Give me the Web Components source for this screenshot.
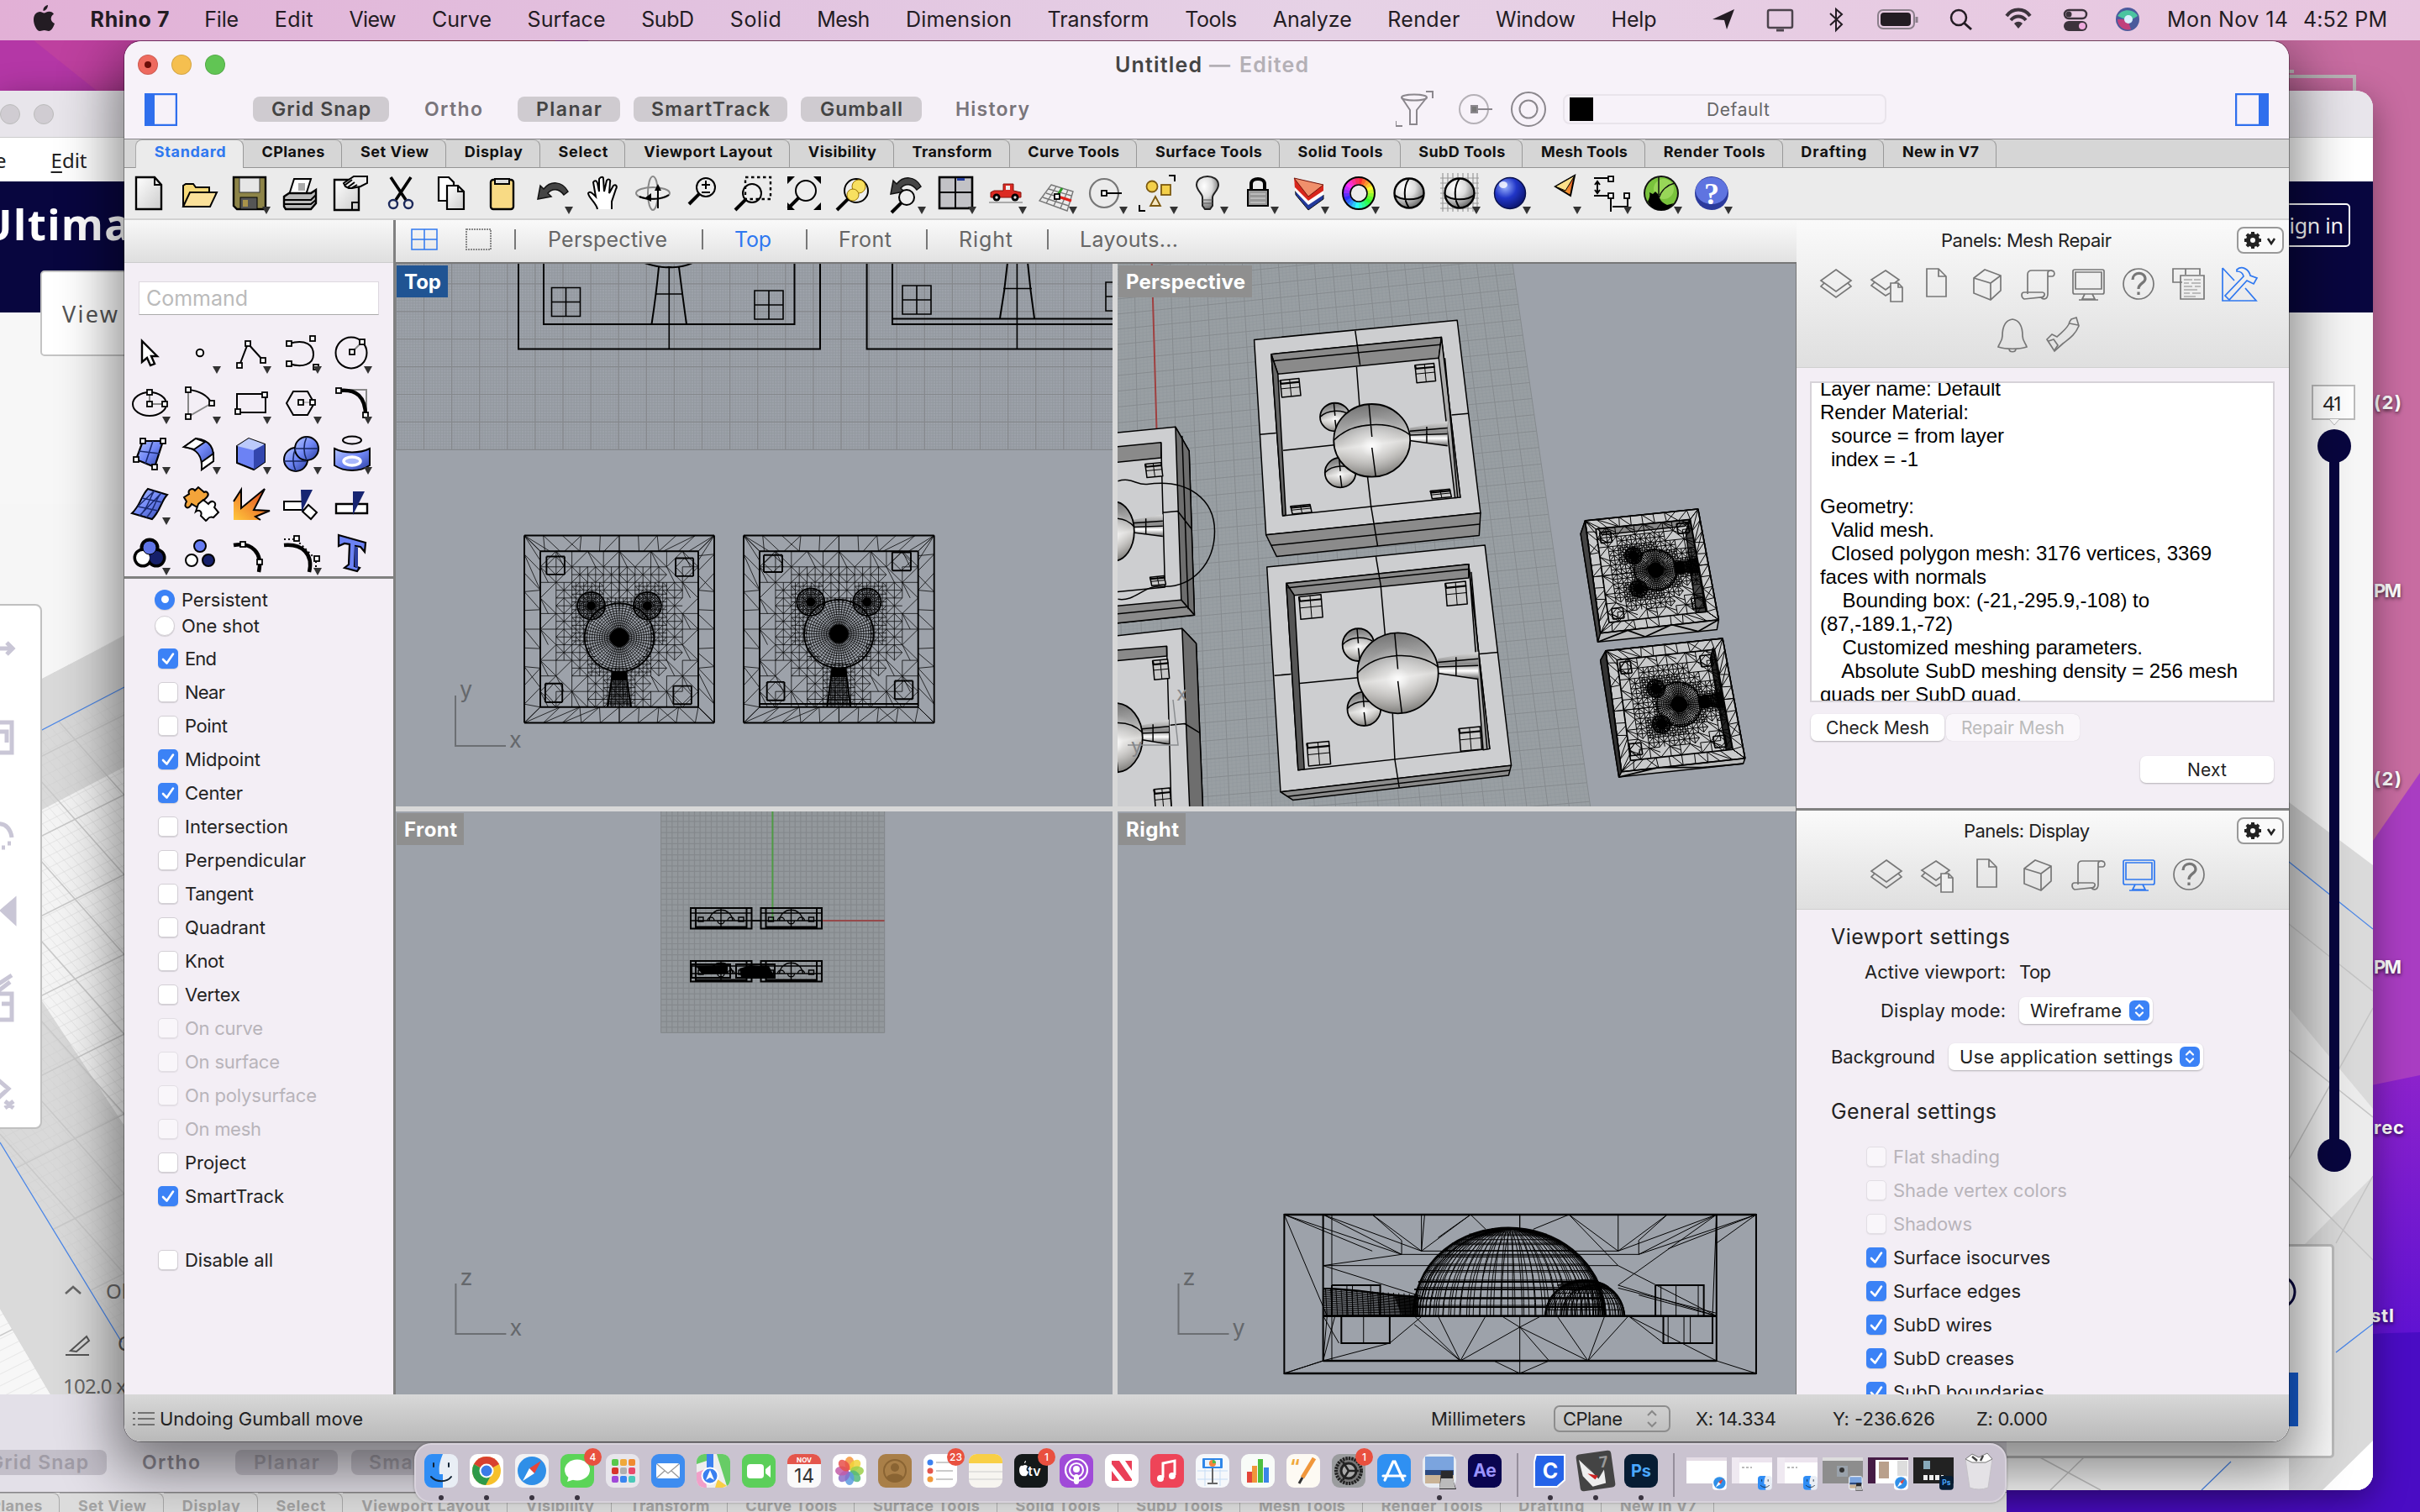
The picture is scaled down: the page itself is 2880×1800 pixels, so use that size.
<!DOCTYPE html>
<html lang="en">
<head>
<meta charset="utf-8">
<title>Rhino 7</title>
<style>
html,body{margin:0;padding:0}
body{width:2880px;height:1800px;overflow:hidden;position:relative;font-family:Inter,"Liberation Sans",sans-serif;font-size:22px;color:#222}
</style>
</head>
<body>
<desk-top></desk-top>
<script>
const def=(name,css,html,after)=>customElements.define(name,class extends HTMLElement{
  constructor(){super();this.attachShadow({mode:'open'})}
  connectedCallback(){
    if(this.done)return;this.done=true;
    this.shadowRoot.innerHTML='<style>*{box-sizing:border-box}:host{display:block;box-sizing:border-box}'+css+'</style>'+(typeof html==='function'?html(this):html);
    if(after)after(this);
  }});
const T=(w,t,x='')=>`<fit-text w="${w}" ${x}>${t}</fit-text>`;
const L=(a,b,c,d)=>`M${a.toFixed(1)} ${b.toFixed(1)}L${c.toFixed(1)} ${d.toFixed(1)}`;

/* ---------- icon artwork, each on a 40 unit square ---------- */
const K='fill="none" stroke="#000" stroke-width="2"';
const H=(x,y)=>`<rect x="${x-3}" y="${y-3}" width="6" height="6" fill="#fff" stroke="#000" stroke-width="1.8"/>`;
const mag=(x,y,r)=>`<path d="M${x-r*.7} ${y+r*.7}L${x-r-9} ${y+r+9}" stroke="#000" stroke-width="4"/><circle cx="${x}" cy="${y}" r="${r}" fill="#eee" stroke="#000" stroke-width="2"/>`;
const ARW='<path d="M3 27L6 11L10 15C18 5 32 5 39 18L34 22C28 14 20 14 15 20L19 24Z" fill="#444" stroke="#111" stroke-width="1.5"/>';
const G=`<defs><linearGradient id="w" x2="1" y2="1"><stop stop-color="#fff"/><stop offset="1" stop-color="#ccc"/></linearGradient><linearGradient id="b" x2="1" y2="1"><stop stop-color="#b6c6ff"/><stop offset=".5" stop-color="#6f86f5"/><stop offset="1" stop-color="#2b3fa0"/></linearGradient><linearGradient id="o" x1="0" y1="1" x2="1" y2="0"><stop stop-color="#ffc83c"/><stop offset="1" stop-color="#e2421f"/></linearGradient><radialGradient id="s" cx=".35" cy=".3" r=".8"><stop stop-color="#fff"/><stop offset=".45" stop-color="#ddd"/><stop offset="1" stop-color="#555"/></radialGradient><radialGradient id="u" cx=".35" cy=".3" r=".8"><stop stop-color="#9bb4ff"/><stop offset=".45" stop-color="#2136c8"/><stop offset="1" stop-color="#081060"/></radialGradient></defs>`;
const I={
new:`<path d="M5 1H27L35 10V39H5Z" fill="url(#w)" stroke="#000" stroke-width="2.4"/><path d="M27 1V10H35" ${K}/>`,
open:`<path d="M1 36V11L4 9H13L16 13H32V19" fill="#f6d978" stroke="#000" stroke-width="2"/><path d="M1 36L9 19H41L33 36Z" fill="#fbe19a" stroke="#000" stroke-width="2"/>`,
save:`<path d="M1 1H39V39H5L1 35Z" fill="#8d8448" stroke="#000" stroke-width="2.4"/><rect x="8" y="2" width="24" height="17" fill="#e6e6e6" stroke="#333"/><rect x="9" y="25" width="20" height="14" fill="#555" stroke="#000"/><rect x="12" y="28" width="6" height="8" fill="#a9934a"/>`,
print:`<path d="M7 22L13 3H33L27 22Z" fill="#fff" stroke="#000" stroke-width="2"/><rect x="18" y="8" width="8" height="9" fill="#aaa"/><path d="M1 24L7 20H33L39 16V32L33 39H3L1 36Z" fill="#bbb" stroke="#000" stroke-width="2.4"/><path d="M1 28H33L39 22M1 33H33L39 28" ${K} stroke-width="2.4"/>`,
props:`<path d="M1 4H30V40H1Z" fill="url(#w)" stroke="#000" stroke-width="2.4"/><path d="M22 40V31H30" ${K}/><path d="M40 0H24L12 8L14 12L18 14L22 14L32 12L40 8Z" fill="#eee" stroke="#000" stroke-width="2"/><path d="M14 10L22 4M17 13L25 7M21 14L28 10" ${K}/>`,
cut:`<path d="M8 1L26 28M32 1L14 28" stroke="#000" stroke-width="3.6"/><circle cx="11" cy="33" r="5" fill="none" stroke="#1d2a5c" stroke-width="2.4"/><circle cx="29" cy="33" r="5" fill="none" stroke="#1d2a5c" stroke-width="2.4"/>`,
copy:`<path d="M5 1H17L23 7V29H5Z" fill="#fff" stroke="#000" stroke-width="2.2"/><path d="M15 11H28L35 18V39H15Z" fill="url(#w)" stroke="#000" stroke-width="2.2"/><path d="M28 11V18H35" ${K}/>`,
paste:`<rect x="7" y="4" width="27" height="35" rx="3" fill="#f8da84" stroke="#000" stroke-width="2.4"/><path d="M12 3H29V9H12Z" fill="#ddd" stroke="#000" stroke-width="2"/>`,
undo:ARW,
hand:`<path d="M14 39C13 32 3 25 3 20C5 17 8 20 12 24L9 7C11 4 13 5 14 8L16 18L16 3C18 0 21 0 21 3L22 18L25 5C27 2 30 4 29 7L28 20L33 11C36 9 38 12 36 15L31 30L31 39" fill="#fff" stroke="#000" stroke-width="2"/>`,
rot:`<ellipse cx="20" cy="20" rx="20" ry="7" fill="none" stroke="#888" stroke-width="2"/><ellipse cx="20" cy="20" rx="6" ry="20" fill="none" stroke="#888" stroke-width="2"/><path d="M4 24C12 28 30 28 39 22M26 38V12" ${K} stroke-width="2.6"/><path d="M22 17L26 9L30 17ZM18 20L10 26L18 30Z"/>`,
zoom:mag(23,13,11)+`<path d="M18 10H28M23 5V15M18 19H28" ${K}/>`,
zwin:mag(18,20,11)+`<path d="M10 1H40V27H10Z" fill="none" stroke="#000" stroke-width="2.4" stroke-dasharray="3.5 3.5"/>`,
zext:mag(22,17,12)+`<path d="M0 0H9L0 9ZM40 0V9L31 0ZM0 40V31L9 40ZM40 40H31L40 31Z"/>`,
zsel:mag(22,17,14)+`<circle cx="25" cy="12" r="8" fill="#f8e060" stroke="#987400"/><circle cx="18" cy="22" r="7" fill="#f8e060" stroke="#987400"/>`,
uview:`<g transform="translate(0 -6)">${ARW}</g>`+mag(22,25,9),
four:`<rect x="1" y="1" width="39" height="37" fill="#c2c2c6" stroke="#000" stroke-width="2.6"/><path d="M20 1V38M1 19H40" ${K}/><rect x="22" y="2" width="9" height="3" fill="#223a9c"/>`,
car:`<path d="M2 25V19L6 17H17V9H29V17L38 19V25Z" fill="#dc2a22" stroke="#86130d"/><path d="M20 16V11H25V16Z" fill="#eee"/><circle cx="9" cy="25" r="4.5"/><circle cx="31" cy="25" r="4.5"/><circle cx="9" cy="25" r="1.7" fill="#ddd"/><circle cx="31" cy="25" r="1.7" fill="#ddd"/><rect y="30" width="40" height="2" fill="#aaa"/>`,
cpl:`<g fill="none" stroke="#777" stroke-width="1.4"><path d="M14 10L40 18L33 41L0 29ZM11 15L38 23M8 20L37 29M4 25L35 35M20 12L8 32M27 14L17 35M34 16L25 38"/></g><path d="M22 24L38 29" stroke="#e0211b" stroke-width="3.4"/><path d="M22 22L27 14" stroke="#2b9c26" stroke-width="3"/>${H(21,24)}`,
circ:`<circle cx="17" cy="20" r="17" fill="none" stroke="#777" stroke-width="2.2"/><path d="M17 20H38" ${K}/>${H(17,20)}`,
filt:`<g fill="#f4d04a" stroke="#7d5a10" stroke-width="1.8"><circle cx="14" cy="12" r="6.5"/><rect x="25" y="10" width="11" height="12"/><path d="M18 24L24 35H12Z" fill="#f6e7c0"/></g><path d="M34 -1H41V6M6 41H-1V34" ${K}/>`,
bulb:`<path d="M14 25C14 20 7 17 7 10C7 3 14 0 20 0S33 3 33 10C33 17 26 20 26 25V35L23 39H17L14 35Z" fill="url(#s)" stroke="#222" stroke-width="2"/><path d="M14 28H26M14 32H26" stroke="#555"/>`,
lock:`<path d="M12 17V9C12 1 28 1 28 9V17" fill="none" stroke="#000" stroke-width="4"/><rect x="8" y="16" width="24" height="19" fill="#999" stroke="#000" stroke-width="2"/><path d="M11 21H29M11 26H29M11 31H29" stroke="#ddd"/>`,
layer:`<path d="M4 8L5 22L20 40L38 27V22Z" fill="#223a9c" stroke="#111"/><path d="M3 5L4 17L20 34L38 22V18Z" fill="#fff"/><path d="M3 2L4 13L20 29L38 17V10Z" fill="#d8261c"/><path d="M3 2L38 10L20 24Z" fill="#f0906c" stroke="#71160e"/>`,
wheel:`<g fill="none" stroke-width="8">${[...Array(24)].map((_,i)=>`<path d="M20 5.500A14.500 14.500 0 0 1 24.500 6.200" transform="rotate(${i*15} 20 20)" stroke="hsl(${i*15} 95% 58%)"/>`).join('')}</g><circle cx="20" cy="20" r="19" ${K}/><circle cx="20" cy="20" r="10" fill="#ebebeb" stroke="#000" stroke-width="1.6"/>`,
sph:`<circle cx="20" cy="20" r="17.500" fill="url(#s)" stroke="#000" stroke-width="2.4"/><path d="M20 2.500C13 12 13 28 20 37.500M2.500 22C10 29 30 29 37.500 22" ${K}/>`,
blue:`<circle cx="20" cy="20" r="18.500" fill="url(#u)" stroke="#08104c" stroke-width="1.5"/><ellipse cx="12" cy="10" rx="5" ry="4" fill="#fff" opacity=".8"/>`,
cone:`<path d="M14 12L37 -1L32 23Z" fill="url(#o)" stroke="#000" stroke-width="2"/><path d="M14 12L37 -1L26 17Z" fill="#fde08a" stroke="#000"/>`,
dims:`<path d="M0 2H22M4 6V20M0 23H22M20 26V42M40 23V42M22 36H40M1 10L4 6L7 10M1 16L4 20L7 16" ${K}/>${H(20,3)+H(20,23)+H(39,23)}`,
grass:`<circle cx="20" cy="20" r="21" fill="#111"/><circle cx="20" cy="20" r="19" fill="#79c23c"/><circle cx="23" cy="15" r="12" fill="#98d658"/><path d="M4 30C6 26 7 22 6 19L10 21L13 18L17 22C18 27 20 31 27 34L35 32L29 38C22 42 12 40 8 36Z"/><path d="M17 0V22M17 26C20 16 28 10 36 8" fill="none" stroke="#111" stroke-width="1.500"/>`,
help:`<circle cx="20" cy="20" r="20" fill="#2b3a9c"/><ellipse cx="20" cy="17" rx="19" ry="16" fill="#5f74e0"/><text x="20" y="33" font-size="36" font-weight="700" font-family="Liberation Serif" text-anchor="middle" fill="#fff">?</text>`,
/* modelling palette */
ptr:`<path d="M11 6V31L17 26L21 35L26 33L22 24L29 24Z" fill="#fff" stroke="#000" stroke-width="2.4"/>`,
pnt:`<circle cx="20" cy="20" r="4.2" fill="#fff" stroke="#000" stroke-width="2"/>`,
poly:`<path d="M7 35L17 9L35 29" ${K}/>${H(7,35)+H(17,9)+H(35,29)}`,
crv:`<path d="M6 9C26 3 35 11 35 22C35 34 22 38 6 33" ${K}/>${H(6,9)+H(34,3)+H(6,33)+H(38,37)}`,
cir:`<circle cx="20" cy="20" r="18.500" ${K}/><path d="M21 19L33 7" stroke="#888" stroke-width="2"/>${H(21,19)+H(33,7)}`,
ell:`<ellipse cx="20" cy="21" rx="20" ry="14" ${K}/><path d="M20 7V21H38" fill="none" stroke="#888" stroke-width="2"/>${H(20,7)+H(20,21)+H(38,21)}`,
arc:`<path d="M6 4V36L34 20" fill="none" stroke="#888" stroke-width="2"/><path d="M6 4C18 5 28 9 34 20" ${K}/>${H(6,4)+H(34,20)+H(6,36)}`,
rect:`<path d="M4 9H38V31H4Z" ${K} stroke-width="2.4"/>${H(37,10)+H(5,30)}`,
hex:`<path d="M3 20L11 6H28L36 20L28 34H11Z" ${K}/><path d="M20 19H34" stroke="#888"/>${H(20,19)+H(34,19)}`,
fil:`<path d="M6 4H38V35" fill="none" stroke="#888" stroke-width="2"/><path d="M6 5C26 3 37 12 37 35" fill="none" stroke="#000" stroke-width="4.400"/>${H(5,5)+H(37,34)}`,
srf:`<path d="M12 5H36L26 36L4 27Z" fill="url(#b)" stroke="#000" stroke-width="2.2"/><path d="M24 5L15 32M7 17L32 20" stroke="#1a2a70" stroke-width="1.600"/>${H(12,5)+H(36,5)+H(4,27)+H(26,36)}`,
swp:`<path d="M1 12L15 2C33 4 37 14 36 29L22 39C23 24 18 14 1 12Z" fill="url(#b)" stroke="#000" stroke-width="2"/><path d="M1 12L15 2L26 6L13 15ZM22 30L36 20V29L22 39Z" fill="#fff" stroke="#000" stroke-width="2"/>`,
box:`<path d="M4 11L18 2L37 9V30L24 39L4 31Z" fill="#6c82f4" stroke="#000" stroke-width="2"/><path d="M4 11L18 2L37 9L24 16Z" fill="#bccafb"/><path d="M24 16L37 9V30L24 39Z" fill="#3346ae"/>`,
sph2:`<g fill="url(#b)" stroke="#000" stroke-width="2"><circle cx="14" cy="27" r="14"/><circle cx="27" cy="14" r="14"/></g><path d="M27 0C23 9 23 19 27 28M13 14H41M14 13C10 22 10 32 14 41M0 29H26" stroke="#16265f" fill="none" stroke-width="1.600"/>`,
prj:`<ellipse cx="21" cy="4" rx="11" ry="4.500" ${K}/><path d="M0 14C12 20 30 20 42 14V34C30 42 12 42 0 34Z" fill="url(#b)" stroke="#000" stroke-width="2"/><ellipse cx="21" cy="29" rx="10" ry="5" fill="#a9b8fb" stroke="#fff" stroke-width="3.500"/>`,
msh:`<path d="M18 2L41 9C34 16 33 28 23 38L-1 31C9 22 10 10 18 2Z" fill="url(#b)" stroke="#000" stroke-width="2"/><path d="M11 13L35 18M6 23L30 28M26 4C20 12 18 26 8 34M34 7C26 15 26 28 16 36M6 23L26 4M8 34L34 7" fill="none" stroke="#1a2a70" stroke-width="1.500"/>`,
puz:`<path d="M1 12L7 8C5 3 11 0 14 4L18 0L25 6C28 4 32 8 28 12L22 18L17 24L10 20C6 28 0 24 4 17Z" fill="#f3a43a" stroke="#000" stroke-width="2"/><path d="M18 20L24 15L30 20C34 14 41 18 37 24L42 30L36 36C30 34 30 38 27 40L21 34C23 29 19 26 15 29Z" fill="#fff" stroke="#000" stroke-width="2"/>`,
exp:`<path d="M0 39V15L9 3V25L37 2L23 27L42 28L26 35L32 39Z" fill="url(#o)"/><path d="M0 17L9 3V25L37 2L24 27L43 28L26 35L32 39" ${K} stroke-width="2.200"/>`,
trm:`<path d="M0 17H22V27H0Z" fill="#fff" stroke="#000" stroke-width="2"/><path d="M22 29L29 21L39 30L32 38Z" fill="#fff" stroke="#000" stroke-width="2"/><path d="M20 3H34L21 29Z" fill="#172572"/>`,
spl:`<path d="M2 20H39V31H2Z" fill="#fff" stroke="#000" stroke-width="2.400"/><path d="M22 5H36L22 33Z" fill="#172572"/>`,
bool:`<g stroke="#000" stroke-width="7"><circle cx="20" cy="12" r="8"/><circle cx="12" cy="24" r="8"/><circle cx="28" cy="24" r="8"/></g><circle cx="12" cy="24" r="8" fill="#fff"/><circle cx="28" cy="24" r="8" fill="#16206a"/><circle cx="20" cy="12" r="8" fill="#5f74e6" stroke="#000"/>`,
grp:`<g stroke="#000" stroke-width="2"><circle cx="20" cy="10" r="7" fill="#667cf2"/><circle cx="10" cy="27" r="7" fill="#fff"/><circle cx="30" cy="27" r="7" fill="#16206a"/></g>`,
ed1:`<path d="M0 9C22 5 35 18 30 41" fill="none" stroke="#000" stroke-width="4.500"/>${H(11,8)+H(31,29)}`,
ed2:`<path d="M0 9C22 7 35 20 30 41" fill="none" stroke="#000" stroke-width="4.500"/><path d="M0 2H14L38 26V38" fill="none" stroke="#000" stroke-width="2" stroke-dasharray="2 3"/>${H(15,1)+H(39,25)}`,
txt:`<path d="M5 -3L37 6L36 17L31 11L25 10L24 34L30 36L27 40L12 36L17 32L18 8L12 7L5 10Z" fill="#6c82f4" stroke="#000" stroke-width="2.200"/><path d="M24 10L24 34L28 37L28 12Z" fill="#2c3e9f"/>`,
/* panel selectors */
p_lay:`<path d="M20 3L38 16L20 29L2 16Z"/><path d="M6 19L2 23L20 36L38 23L34 19"/>`,
p_lay2:`<path d="M19 4L35 15L19 27L2 15Z"/><path d="M6 18L2 22L19 34L24 31"/><path d="M25 19H34L39 24V41H25Z" fill="#efefef"/><path d="M34 19V24H39"/>`,
p_doc:`<path d="M8 2H22L31 11V35H8ZM22 2V11H31"/>`,
p_box:`<path d="M4 13L17 3L36 10L36 28L24 39L4 31ZM4 13L24 19L36 10M24 19V39"/>`,
p_scr:`<path d="M8 32V9C8 5 10 4 13 4H36C41 4 41 11 37 11H32V32C32 39 26 39 24 36L4 38C0 36 0 30 4 30H26M32 11V7C32 4 36 3 38 5M26 30C30 31 28 36 24 36"/>`,
p_mon:`<rect x="2" y="3" width="37" height="29" rx="2"/><path d="M5 6H36V26H5ZM16 32L13 38H28L25 32M9 39H32"/>`,
p_q:`<circle cx="20" cy="20" r="18"/><path d="M13 15C13 5 28 5 28 14C28 19 20 19 20 26M20 29.500V33" stroke-width="3.200"/>`,
p_lib:`<path d="M12 2H1V18H12M1 2H33V9M16 2V9"/><path d="M10 10H38V38H10Z"/><path d="M14 15H24M26 15H34M14 19H20M23 19H34M14 23H24M27 23H34M14 27H30M14 31H21M24 31H34M14 35H28" stroke="#aaa"/>`,
p_fix:`<path d="M0 1L14 16M0 1V40H40L27 25M0 40V1"/><path d="M17 3C23 -2 31 2 33 10L41 13L37 20L29 16L8 39L3 34L25 11C24 6 21 5 17 5Z"/>`,
p_bell:`<path d="M20 2C27 3 32 9 32 22C32 28 36 31 37 35C28 38 12 38 3 35C4 31 8 28 8 22C8 9 13 3 20 2ZM16 37C16 42 24 42 24 37"/>`,
p_leg:`<path d="M30 2L36 0L39 10C34 22 26 26 20 31L10 40L1 26L7 20L13 23C19 17 27 12 28 5Z"/><path d="M3 28L9 26L14 33L10 39M28 7L38 9"/>`,
};
def('i-c','svg{display:block;overflow:visible}',e=>{const s=e.getAttribute('s')||40,n=e.getAttribute('n'),c=e.getAttribute('c');
 const p=n.startsWith('p_');return `<svg width="${s}" height="${s}" viewBox="0 0 40 40">${G}<g ${p?`fill="none" stroke="${c||'#777'}" stroke-width="1.700"`:''}>${I[n]}</g></svg>`});
def('tool-cell',':host{width:60px;height:60px;flex:none;display:grid;place-items:center;position:relative}i{position:absolute;left:45px;top:46px;border:5px solid transparent;border-top:9px solid #333;border-bottom:0}',
 e=>`<i-c n="${e.getAttribute('n')}"></i-c>${e.hasAttribute('d')?'<i></i>':''}`);
const cells=s=>s.split(' ').map(x=>`<tool-cell n="${x.replace('*','')}" ${x.endsWith('*')?'d':''}></tool-cell>`).join('');

/* ---------- check box rows ---------- */
const tick='<svg width="24" height="24" viewBox="0 0 24 24"><path d="M6 13L10.500 17.500L18 6.500" fill="none" stroke="#fff" stroke-width="2.600" stroke-linecap="round" stroke-linejoin="round"/></svg>';
def('check-row',':host{display:flex;align-items:center;height:40px;gap:8px}b{width:24px;height:24px;border-radius:5px;background:#fff;border:1px solid #d3cfd5;box-shadow:0 1px 1px #0002;flex:none}b.on{background:#3b82f6;border:0}b.off{opacity:.5}:host([r]) b{border-radius:50%}:host([r]){height:31px}i{display:block;width:9px;height:9px;border-radius:50%;background:#fff;margin:7.500px}',
 e=>{const s=e.getAttribute('s'),r=e.hasAttribute('r');return `<b class="${s=='1'?'on':''} ${s=='x'?'off':''}">${s=='1'?(r?'<i></i>':tick):''}</b><span style="${s=='x'?'color:#b8b4ba':''}"><slot></slot></span>`});
const rows=a=>a.map(([t,w,s])=>`<check-row s="${s||0}">${T(w,t)}</check-row>`).join('');

/* ---------- window title, snap bar and tool tabs ---------- */
def('snap-bar',`:host{height:117px;background:#f7f2f9;border-bottom:1px solid #88868a;border-radius:20px 20px 0 0;font-weight:600}
.t{height:56px;display:flex;align-items:center;position:relative}
.l{display:flex;gap:16px;padding-left:16px}.l i{width:24px;height:24px;border-radius:50%;border:1px solid #0002;display:grid;place-items:center}.l u{width:8px;height:8px;border-radius:50%;background:#6b0d08}
.n{display:flex;font-size:25px;gap:9px;padding-left:1059px;color:#444}.n span{color:#b4b0b6;display:flex;gap:13px}
.r{height:50px;display:flex;align-items:center;font-size:23px;color:#79757b}
.p{height:30px;display:flex;align-items:center;border-radius:8px}.on{background:#cfcbd0;color:#444}
:host([dim]){background:#e3e0e8}:host([dim]) .on{background:#c3bfc9;color:#a09ca6}:host([dim]) .r{color:#8c8892}:host([dim]) .t{opacity:0}
svg{display:block}.f{height:36px;width:385px;border:2px solid #e9e4eb;border-radius:8px;display:flex;align-items:center;font-weight:400;font-size:21px;color:#666;padding-left:6px}.f b{width:28px;height:28px;background:#000;margin-right:135px}`,
 e=>`<div class="t"><div class="l"><i style="background:#ee6a5f"><u></u></i><i style="background:#f5bf4f"></i><i style="background:#61c554"></i></div>
 <div class="n">${e.hasAttribute('dim')?'':T(103,'Untitled')+'<span>'+T(23,'—')+T(82,'Edited')+'</span>'}</div></div>
 <div class="r"><svg style="margin:0 90px 0 24px" width="39" height="39"><path d="M1 1H38V38H1Z" fill="none" stroke="#2f6fed" stroke-width="2.500"/><rect width="12" height="39" fill="#2f6fed"/></svg>
 <div class="p on" style="padding:0 22px;margin-right:42px">${T(118,'Grid Snap')}</div><div class="p" style="margin-right:42px">${T(69,'Ortho')}</div>
 <div class="p on" style="padding:0 22px;margin-right:16px">${T(78,'Planar')}</div><div class="p on" style="padding:0 21px;margin-right:16px">${T(141,'SmartTrack')}</div>
 ${e.hasAttribute('dim')?'':`<div class="p on" style="padding:0 23px;margin-right:40px">${T(98,'Gumball')}</div><div class="p" style="width:524px">${T(88,'History')}</div>
 <svg width="199" height="44" viewBox="0 0 199 44" fill="none" stroke="#8b878d" stroke-width="2"><ellipse cx="22" cy="8" rx="15" ry="3.500"/><path d="M7 8L17 23V40H25V23L37 8M36 1H44V9M0 36V42H8" /><circle cx="93" cy="22" r="17" stroke="#b5b1b7"/><path d="M93 22H115"/><rect x="90" y="18" width="7" height="8" fill="#777"/><circle cx="158" cy="22" r="20"/><circle cx="158" cy="22" r="10.500"/></svg>
 <div class="f"><b></b>${T(75,'Default')}</div><svg style="margin-left:415px" width="40" height="39"><path d="M1 1H39V38H1Z" fill="none" stroke="#2f6fed" stroke-width="2.500"/><rect x="28" width="12" height="39" fill="#2f6fed"/></svg>`}</div>`);
def('tool-tabs',`:host{height:34px;background:#d6d6d6;border-bottom:1px solid #949494;display:flex;padding-left:13px;font-size:18px;font-weight:700;color:#111}
div{height:34px;padding:0 20px 6px 21.700px;display:flex;align-items:center;border:1px solid #999;border-left:0;border-bottom:0;border-radius:0 8px 0 0;border-top-color:#aaa;flex:none}
.a{background:#ebebeb;color:#2f78f0;border-left:1px solid #aaa;border-radius:8px 8px 0 0}
:host([dim]){color:#a3a3a3;background:#dcdcdc}:host([dim]) div{padding-bottom:5px;border-color:#aaa}:host([dim]) .a{color:#a3a3a3}`,
 ()=>[['Standard',85],['CPlanes',75],['Set View',81],['Display',69],['Select',59],['Viewport Layout',153],['Visibility',81],['Transform',95],['Curve Tools',109],['Surface Tools',127],['Solid Tools',101],['SubD Tools',103],['Mesh Tools',103],['Render Tools',121],['Drafting',78],['New in V7',91]].map(([t,w],i)=>`<div class="${i?'':'a'}">${T(w,t)}</div>`).join(''));
def('tool-strip',':host{display:flex;height:62px;background:#ebebeb;border-bottom:2px solid #d2d2d2}tool-cell:first-of-type{margin-left:-1px}',
 ()=>cells('new open save* print props cut copy paste undo* hand rot zoom zwin zext zsel uview* four* car* cpl* circ* filt* bulb* lock* layer* wheel* sph mgrid* blue* cone* dims* grass* help*'));
I.mgrid=`<path d="M-3 2H43M-3 8H43M-3 14H43M-3 20H43M-3 26H43M-3 32H43M-3 38H43M0 -4V42M6 -4V42M12 -4V42M18 -4V42M24 -4V42M30 -4V42M36 -4V42M41 -4V42" stroke="#999" stroke-width="1.200"/>`+I.sph;

/* ---------- left side bar ---------- */
def('side-bar',`:host{width:323px;border-right:3px solid #808080;background:#f3eef5;display:flex;flex-direction:column;flex:none}
.h{height:51px;background:linear-gradient(#f8f8f8,#dfdfdf);border-bottom:1px solid #ccc;flex:none}
.c{margin:22px 0 0 17px;width:286px;height:40px;border:1px solid #ddd8df;border-bottom-color:#aaa;background:#fff;font-size:25px;color:#bbb;display:flex;align-items:center;padding-left:8px;flex:none}
.g{display:flex;flex-wrap:wrap;height:299px;margin-top:15px;padding-right:20px;overflow:hidden;align-content:flex-start;border-bottom:3px solid #808080;flex:none}
.o{padding:9px 0 0 36px;color:#232323}.k{padding:4px 0 0 4px}`,
 `<div class="h"></div><div class="c">${T(121,'Command')}</div><div class="g">${cells('ptr pnt* poly* crv* cir* ell* arc* rect* hex* fil* srf* swp* box* sph2* prj* msh* puz exp trm spl bool* grp ed1 ed2* txt')}</div>
 <div class="o"><check-row r s="1">${T(103,'Persistent')}</check-row><check-row r s="0">${T(93,'One shot')}</check-row><div class="k">
 ${rows([['End',38,1],['Near',48],['Point',51],['Midpoint',90,1],['Center',69,1],['Intersection',123],['Perpendicular',144],['Tangent',82],['Quadrant',96],['Knot',47],['Vertex',66],['On curve',93,'x'],['On surface',113,'x'],['On polysurface',157,'x'],['On mesh',91,'x'],['Project',73],['SmartTrack',118,1]])}
 <div style="height:36px"></div>${rows([['Disable all',105]])}</div></div>`);

/* ---------- model drawings ---------- */
const hd=[.5,.545],er=[[.352,.375],[.648,.375]];
function mesh(P,sq,dy=0){
 let d='',b='',f='';const l=(x,y,u,v)=>{const p=P(x,y),q=P(u,v);d+=L(p[0],p[1],q[0],q[1])},bl=(x,y,u,v)=>{const p=P(x,y),q=P(u,v);b+=L(p[0],p[1],q[0],q[1])};
 const box=(x,y,u,v)=>{bl(x,y,u,y);bl(u,y,u,v);bl(u,v,x,v);bl(x,v,x,y)};
 const a=.084,z=.916,w=z-a;box(0,0,1,1);box(a,a,z,z);
 for(let i=0;i<=10;i++){const o=i/10,n=a+w*Math.min(8,Math.round(i*.8))/8,m=a+w*Math.min(8,Math.round(i*.8)+1)/8;
  l(o,0,n,a);if(i%2)l(o,0,Math.max(a,n-.08),a);l(o,1,n,z);l(o,1,m>z?z:m,z);l(0,o,a,n);if(i%2)l(0,o,a,m>z?z:m);l(1,o,z,n);if(i%2)l(1,o,z,Math.max(a,n-.08))}
 l(0,0,a,a+.05);l(1,0,z,a+.05);l(0,0,a+.05,a);l(1,0,z-.05,a);
 const N=10,s=w/N,hy=hd[1]+dy;
 for(let i=0;i<N;i++)for(let j=0;j<N;j++){const x=a+i*s,y=a+j*s,cx=x+s/2-.5,cy=y+s/2-hy,r=Math.min(Math.hypot(cx,cy),Math.hypot(Math.abs(cx)-.148,cy+.17)+.11,Math.hypot(cx,Math.max(0,.22-cy))+.13);
  const k=r<.22?4:r<.31?2:1,t=s/k;
  for(let p=0;p<k;p++)for(let q=0;q<k;q++){const X=x+p*t,Y=y+q*t;if(Math.hypot(X+t/2-.5,Y+t/2-hy)<.17)continue;
   if(k>1||(i+j)%3){l(X,Y,X+t,Y);l(X,Y,X,Y+t)}if(k<4||(p+q)%2)((i+j+p*(k<4)+q)%2)?l(X,Y,X+t,Y+t):l(X+t,Y,X,Y+t);if(k==1&&(i+j)%2)l(X,Y,X+t/2,Y+t)}}
 const disc=(cx,cy,R,n,c,r0)=>{for(let i=0;i<n;i++){const t=i/n*6.2832;l(cx,cy,cx+R*Math.cos(t),cy+R*Math.sin(t))}
  for(let k=1;k<=c;k++){const r=R*k/c;for(let i=0;i<32;i++){const t=i/32*6.2832,u=(i+1)/32*6.2832;(k==c?bl:l)(cx+r*Math.cos(t),cy+r*Math.sin(t),cx+r*Math.cos(u),cy+r*Math.sin(u))}}
  for(let i=0;i<20;i++){const t=i/20*6.2832,p=P(cx+r0*Math.cos(t),cy+r0*Math.sin(t));f+=(i?'L':'M')+p[0].toFixed(1)+' '+p[1].toFixed(1)}f+='Z'};
 disc(.5,hy,.183,56,14,.05);er.forEach(e=>disc(e[0],e[1]+dy,.073,28,7,.024));
 for(let i=-6;i<=6;i++)l(.5+i*.006,.73+dy,.5+i*.0095,.91);for(let j=0;j<14;j++){const y=.73+dy+j*.013;l(.465-j*.0018,y,.535+j*.0018,y)}
 bl(.465,.73+dy,.438,.915);bl(.535,.73+dy,.562,.915);
 {const q=[[.463,.725],[.537,.725],[.54,.775],[.46,.775]].map(([x,y])=>P(x,y+dy));f+='M'+q.map(p=>p[0].toFixed(1)+' '+p[1].toFixed(1)).join('L')+'Z'}
 sq.forEach(([x,y,u,v])=>{box(x,y,u,v);l(x,(y+v)/2,(x+u)/2,y);l((x+u)/2,y,u,(y+v)/2);l(u,(y+v)/2,(x+u)/2,v);l((x+u)/2,v,x,(y+v)/2)});
 l(.5,0,.5,.4);l(.5,.9,.5,1);
 return [d,b,f];
}
const SQ=[[.117,.112,.212,.208],[.797,.121,.89,.217],[.11,.79,.2,.89],[.785,.803,.88,.9]];
const SQ2=[[.106,.104,.203,.195],[.78,.09,.878,.187],[.122,.782,.214,.88],[.793,.776,.888,.873]];
const vp=(w,h,vx,vy,body)=>`<svg width="${w}" height="${h}" viewBox="${vx} ${vy} ${w} ${h}" preserveAspectRatio="xMinYMin slice">${body}</svg>`;
const axis=(x,y,a,b)=>`<path d="M${x} ${y}V${y+60}H${x+60}" fill="none" stroke="#6c6f73" stroke-width="2"/><g font-size="27" fill="#65686c"><text x="${x+5}" y="${y+2}">${a}</text><text x="${x+64}" y="${y+62}">${b}</text></g>`;
function topView(){
 let mi='',ma='';for(let x=471.400;x<1326;x+=3.310)mi+=`M${x.toFixed(1)} 312V535`;for(let y=535.300;y>312;y-=3.290)mi+=`M470 ${y.toFixed(1)}H1326`;
 for(let x=471.400;x<1326;x+=33.1)ma+=`M${x.toFixed(1)} 312V535`;for(let y=535.300;y>312;y-=32.9)ma+=`M470 ${y.toFixed(1)}H1326`;
 const m1=mesh((u,v)=>[624+226*u,637.5+223*v],SQ),m2=mesh((u,v)=>[885+226.700*u,637.5+223*v],SQ2,-.02);
 const win=(x,y,w=34,h=34)=>`M${x} ${y}h${w}v${h}h${-w}zM${x} ${y+h/2}h${w}M${x+w/2} ${y}v${h}`;
 return `<path d="${mi}" stroke="#8e949a" stroke-width=".7" opacity=".75" fill="none"/><path d="${ma}" stroke="#85888c" stroke-width="1.200" fill="none"/>
 <g fill="none" stroke="#000" stroke-width="2"><path d="M617 312V415.500H976V312M647 312V386H945.500V312M767 313Q784 319 796 318Q812 319 824 313M784 318Q781 350 775.500 386M808 318Q812 350 817 386"/><path d="M1031.600 312V415.500H1330M1062 312V386H1330M1062 379.500H1330M1199 312Q1196 345 1190 379M1223 312Q1226 345 1231 379"/>
 <path d="${win(656.5,342.5)+win(898,346)+win(1074,340)+win(1316,336)}M796.300 318V415M1210.400 312V415M780 350H812M1194 343.500H1228" stroke-width="1.600"/>
 <path d="${m1[0]+m2[0]}" stroke-width=".75"/><path d="${m1[1]+m2[1]}M904 838H1092" stroke-width="1.900"/></g><path d="${m1[2]+m2[2]}"/>${axis(542,828,'y','x')}`}
function perspView(){
 let g='',mg='';for(let k=0;k<24;k++){g+=L(918-41*k,33,1095-48.3*k,1568);for(let j=1;j<5;j++)mg+=L(918-41*(k+j/5),33,1095-48.3*(k+j/5),1568)}
 const edge=y=>918+(y-33)*.1153;
 for(let y=50,s=41.5;y<1800;s+=.35,y+=s){const ye=y-115;g+=L(10,y,edge(ye),ye);for(let j=1;j<5;j++)mg+=L(10,y+s*j/5,edge(ye+s*j/5),ye+s*j/5)}
 const pg=(p,f)=>`<path d="M${p}Z" fill="${f}"/>`;
 const win=(x,y,w,h,k=.12)=>pg(`${x} ${y}l${w} ${-w*k}l4 ${h}l${-w} ${w*k}`,'#c9c9c9')+`<path d="M${x+w/2} ${y-3}l4 ${h}M${x+2} ${y+h/2}l${w} ${-w*k}" stroke-width="1"/><path d="M${x} ${y}l2 ${h*.2}l${w} ${-w*k}" fill="none" stroke-width="2.200"/>`;
 const ball=(x,y,rx,ry)=>`<ellipse cx="${x}" cy="${y}" rx="${rx}" ry="${ry}" fill="url(#bl)" stroke-width="1.800"/><ellipse cx="${x}" cy="${y}" rx="${rx}" ry="${ry}" fill="url(#bh)" stroke="none"/><path d="M${x-rx} ${y}C${x-rx*.5} ${y-ry*.55} ${x+rx*.5} ${y-ry*.55} ${x+rx} ${y-ry*.15}M${x-rx*.08} ${y-ry}L${x} ${y-ry*.1}M${x} ${y+ry*.2}L${x+rx*.1} ${y+ry}" fill="none"/>`;
 const cone=(x,y,w,a,b)=>`<path d="M${x} ${y-a}L${x+w} ${y-b-14}V${y+b}L${x} ${y+a*.6}Z" fill="url(#cn)" stroke="none"/><path d="M${x} ${y+a*.6}L${x+w} ${y+b}M${x} ${y-a*.1}L${x+w} ${y-b*.2}M${x} ${y-a*.6}L${x+w} ${y-b*.8}M${x+w*.45} ${y-a-4}v${a*2}"/>`;
 const F='#cdced0';
 const quad=(a,b,c,d)=>(u,v)=>{const s=v,t=u;return [(a[0]*(1-s)+b[0]*s)*(1-t)+(d[0]*(1-s)+c[0]*s)*t,(a[1]*(1-s)+b[1]*s)*(1-t)+(d[1]*(1-s)+c[1]*s)*t]};
 const m1=mesh(quad([1083,760],[1340,727],[1387,1040],[1118,1078]),SQ),m2=mesh(quad([1130,1128],[1396,1093],[1447,1432],[1166,1470]),SQ2);
 return `<defs><linearGradient id="bl" x1=".42" y1="0" x2=".56" y2="1"><stop stop-color="#747474"/><stop offset=".3" stop-color="#a5a5a5"/><stop offset=".5" stop-color="#cbcac8"/><stop offset=".56" stop-color="#dddcda"/><stop offset=".75" stop-color="#b5b3b0"/><stop offset="1" stop-color="#7c7b78"/></linearGradient><radialGradient id="bh" cx=".5" cy=".58" r=".42"><stop stop-color="#fff" stop-opacity=".95"/><stop offset=".35" stop-color="#fff" stop-opacity=".4"/><stop offset="1" stop-color="#fff" stop-opacity="0"/></radialGradient><linearGradient id="cn" x2="0" y2="1"><stop stop-color="#ddd"/><stop offset=".45" stop-color="#888"/><stop offset=".7" stop-color="#fff"/><stop offset="1" stop-color="#666"/></linearGradient></defs>
 <g transform="translate(1320 300) scale(.52296 .42091)"><path d="M0 33H918L1095 1568H0Z" fill="#999fa3" stroke="none"/><path d="${mg}" fill="none" stroke="#92989d" stroke-width=".6"/><path d="${g}" fill="none" stroke="#868b8f" stroke-width="1"/><path d="M97 33L108 500" stroke="#a04040" stroke-width="2"/>
 <g stroke="#000" stroke-width="1.500" stroke-linejoin="round">
 ${pg('330 248L792 193L845 738L357 800',F)+pg('357 800L845 738L842 802L381 861','#8b8b8b')+pg('369 289L756 241L799 694L395 746',F)+pg('369 289L756 241L750 300L384 345','#8a8a8a')+pg('369 289L384 345L402 744L395 746','#666')+pg('756 241L750 300L787 695L799 694','#aaa')}
 <path d="M560 223L571 320M563 325L570 440M588 636L596 720L611 832M342 516L380 512M396 561L512 546M779 461L817 457M369 830L843 770M372 308L754 262M764 300L793 694" fill="none"/>
 ${win(389,363,43,48)+win(696,320,43,50)+win(413,719,44,22)+win(731,676,44,22)}${cone(684,520,86,22,28)}${ball(514,467,34,40)+ball(526,624,35,42)+ball(598,533,87,103)}
 ${pg('359 891L855 829L915 1452L390 1527',F)+pg('390 1527L915 1452L909 1480L418 1550','#8b8b8b')+pg('403 937L818 883L866 1405L430 1465',F)+pg('403 937L818 883L818 922L421 971','#8a8a8a')+pg('403 937L421 971L444 1463L430 1465','#555')+pg('818 883L821 922L851 1408L866 1405','#aaa')}
 <path d="M607 861L618 943L628 1085M645 1305L650 1435L660 1514M376 1198L414 1194M434 1220L566 1204M843 1137L885 1132M405 1540L912 1466M406 950L818 897M824 905L860 1405" fill="none"/>
 ${win(432,975,50,64)+win(765,937,46,64)+win(450,1390,50,64)+win(796,1348,48,64)}${cone(748,1176,92,26,32)}${ball(567,1111,36,46)+ball(580,1292,38,48)+ball(657,1191,92,114)}
 ${pg('0 513L151 495L182 563L194 1027L0 1052',F)+pg('151 495L182 563L194 1027L164 984','#6e6e6e')+pg('0 1003L164 984L194 1027L0 1052','#8b8b8b')+pg('0 553L118 539V582L0 597','#8a8a8a')}<path d="M118 539L127 948L0 963M121 737L156 733L188 784M0 1026L178 1004M166 520L180 1010" fill="none"/>${win(82,600,36,38)+win(93,920,32,24)}${cone(52,780,70,22,24)}${ball(10,790,47,84)}
 <path d="M20 648C50 636 62 660 86 657C180 640 240 700 240 790C240 880 190 950 120 946C80 940 60 990 20 982" fill="none"/>
 ${pg('0 1088L166 1065L198 1107L214 1600L0 1600',F)+pg('166 1065L198 1107L214 1600L184 1600','#6e6e6e')+pg('0 1128L131 1115V1143L0 1158','#8a8a8a')}<path d="M131 1115L142 1600M139 1338L172 1334L206 1360" fill="none"/>${win(99,1156,34,54)+win(102,1520,36,60)}${cone(70,1364,66,24,28)}${ball(14,1374,62,98)}
 ${pg('1083 760L1073 797L1112 1103L1383 1068L1387 1040L1340 727','#b9babb')+pg('1083 760L1340 727L1387 1040L1118 1078','#c9cacb')+pg('1083 760L1073 797L1112 1103L1118 1078','#444')+pg('1130 1128L1118 1155L1160 1485L1443 1447L1447 1432L1396 1093','#b9babb')+pg('1130 1128L1396 1093L1447 1432L1166 1470','#c9cacb')+pg('1130 1128L1118 1155L1160 1485L1166 1470','#333')}
 ${pg('1322 757L1358 1018L1336 1020L1312 790','#444')+pg('1374 1120L1418 1402L1404 1408L1368 1150','#222')+pg('1112 782L1322 757L1310 775L1122 800','#888')}
 <path d="${m1[0]+m2[0]}" fill="none" stroke-width="1"/><path d="${m1[1]+m2[1]}M1112 1103L1180 1070L1220 1088L1280 1054L1340 1073L1387 1040M1160 1485L1250 1458L1350 1458L1443 1447" fill="none" stroke-width="1.700"/><path d="${m1[2]+m2[2]}" stroke-width="5"/></g></g>
 <path d="M1396 833L1402 887H1342" fill="none" stroke="#8a8d90" stroke-width="1.500"/><g font-size="24" fill="#85878a"><text x="1400" y="834">x</text><text x="1346" y="896">y</text></g>`}
function frontView(){
 let g='';for(let i=0;i<=40;i++){g+=`M${(786.6+i*6.650).toFixed(1)} 960V1229.400`}for(let y=1229.400;y>962;y-=6.620)g+=`M786.6 ${y.toFixed(1)}H1052.6`;
 const b=(x,y)=>`<g transform="translate(${x} ${y})"><path d="M0 0H72.500V24.500H0ZM6 0V24.500M66.500 0V24.500M6 22.500H66.500" stroke-width="2"/><path d="M0 6H72M0 15H72M36 0V24M9 11h6v5h-6zM57 11h6v5h-6zM22 15C24 -2 48 -2 50 15M20 15a4 4 0 0 1 8 0M44 15a4 4 0 0 1 8 0M32 15a4 4 0 1 0 8 0"/></g>`;
 return `<rect x="786.6" y="960" width="266" height="269.400" fill="#93989c"/><path d="${g}" fill="none" stroke="#85898d" stroke-width="1.200"/><path d="M919.400 960V1096" stroke="#4f9a45" stroke-width="2"/><path d="M978 1096H1052.600" stroke="#96494b" stroke-width="2"/>
 <g fill="none" stroke="#000" stroke-width="1.400">${b(822,1081)+b(905.5,1081)+b(822,1144)+b(905.5,1144)}<path d="M894 1096H906M823 1148H869V1164H823ZM876 1148H922V1164H876Z" stroke-width="2"/></g><path d="M828 1150L866 1149V1159L836 1160ZM880 1153L893 1149L915 1150L922 1163L882 1164Z"/>${axis(542.4,1528,'z','x')}`}
function rightView(){
 let d='',n='';
 for(let i=0;i<=15;i++){const y=500-315*Math.sin(i/15*1.57),h=120*Math.sqrt(Math.max(0,1-Math.pow((500-y)/315,2)));d+=L(418-h,y,418+h,y);if(i<12&&i%2)d+=L(418-h,y-5,418+h,y-5)}
 const arcs=(c,R,Hh,k)=>{for(let j=-k;j<=k;j++){const r=R*Math.sin(j/k*1.57);let s='M';for(let t=0;t<=10;t++){const a=t/10*1.5708;s+=`${(c+r*Math.cos(a)).toFixed(1)} ${(500-Hh*Math.sin(a)).toFixed(1)} `}d+=s}};
 arcs(418,120,315,21);arcs(424,118,310,13);arcs(515,50,127,14);arcs(525,40,110,8);for(let i=0;i<9;i++){const y=500-127*Math.sin(i/9*1.57),h=50*Math.cos(i/9*1.57);d+=L(515-h,y,515+h,y)}
 for(let i=0;i<18;i++){n+=L(185,402+i*5.600,305,432+i*3.800)}for(let i=0;i<18;i++){n+=L(188+i*6.600,404+i,190+i*6.600,500)}
 return `<g transform="translate(1400 1400) scale(.94384 .33333)" fill="none" stroke="#000"><path d="M136 138H731V705H136ZM185 138V660H681V138M185 500H681M196 390H257V500M196 390V500M208 500V597H269V500M604 390H665V500M604 390V500M614 500V597H676V500" stroke-width="2"/><path d="M196 500H681M185 660H681M136 138H731M136 705H731M185 500H681" stroke-width="2.500"/>
 <path d="M136 138L284 280H583L731 138M185 138L309 268H557L681 138M185 138V320H557L681 500M185 320L309 430M136 138L190 500L185 660L136 705M196 138V390M247 138L284 230V280M247 138L309 268V138M309 268L313 138M371 138L309 268M371 138L330 220M371 138L433 138V185M371 138L390 190M495 138L450 190M495 138L557 268V138M495 138L557 320M619 138L557 268M619 138L583 230V280M681 138L557 390L681 500M136 138L247 268M731 138L620 260M681 138L583 280M185 138L284 280L185 320M557 400L681 490M583 425L681 500M200 500L185 660M185 500L205 597M222 390V500M236 500V597M245 390V500M215 390V500M611 390V500M630 390V500M658 390V500M620 500V597M648 500V597M640 500V597M310 500L269 597L185 660M300 500L358 660L330 500M358 660L390 500M358 660L433 540L519 660L480 500M519 660L540 500M519 660L570 500L614 597M570 500L681 660M433 540L410 500M433 540L460 500M433 138V200M433 500V705M358 660L300 530M136 705L185 660M731 705L681 660M433 705L400 660M433 705L470 660M470 660L433 540M196 500V660M681 138L676 500M731 138L681 240" stroke-width="1"/>
 <path d="${d+n}" stroke-width=".95"/><path d="M298 500C305 80 532 80 540 500M465 500C470 330 560 330 565 500M185 402C230 400 260 430 305 430M305 378H532M300 405H536M300 437H538M299 468H540" stroke-width="2.200"/><path d="M275 430H305V500H285ZM480 390C500 365 530 365 545 395L500 410Z" fill="#000" opacity=".75"/></g>${axis(1402.5,1528,'z','y')}`}
def('view-port',`:host{background:#9da2aa;overflow:hidden;position:relative}svg{display:block;overflow:hidden}svg *{vector-effect:non-scaling-stroke}svg text{stroke:none;font-family:Inter}
div{position:absolute;left:1px;top:2px;height:38px;background:#8f8f8f;color:#fff;font-weight:700;font-size:24px;display:flex;align-items:center;padding:0 8px 0 9px}:host([on]) div{background:#205493}`,
 e=>{const n=e.getAttribute('n'),w=e.getAttribute('w');const [a,b,c,d,f]={Top:[854,646,471,314,topView],Perspective:[807,646,1330,314,perspView],Front:[854,694,471,966,frontView],Right:[807,694,1330,966,rightView]}[n];return vp(a,b,c,d,f())+`<div>${T(w,n)}</div>`});
def('view-area',`:host{width:1667px;flex:none;display:flex;flex-direction:column}
.h{height:52px;background:linear-gradient(#fafafa,#e2e2e2);border-bottom:2px solid #777;display:flex;align-items:center;font-size:25px;color:#666;padding:0 0 4px 17px}
.h i{width:2px;height:24px;background:#777;flex:none}.g{display:grid;grid-template-columns:853px 807px;grid-template-rows:646px 694px;gap:6px;background:#d8d8d8;border-right:1px solid #777}svg{display:block}`,
 `<div class="h"><svg width="124" height="28" fill="none" stroke="#2f78f0" stroke-width="2"><path d="M2 2H32V26H2ZM17 2V26M2 14H32" stroke-width="1.500"/><path d="M67 2H96V26H67Z" stroke="#888" stroke-dasharray="2 1"/></svg><i style="margin-right:38px"></i>${T(142,'Perspective')}<i style="margin:0 37px 0 41px"></i><span style="color:#2f78f0">${T(44,'Top')}</span><i style="margin:0 37px 0 41px"></i>${T(63,'Front')}<i style="margin:0 37px 0 41px"></i>${T(64,'Right')}<i style="margin:0 37px 0 41px"></i>${T(117,'Layouts...')}</div>
 <div class="g"><view-port n="Top" w="44" on></view-port><view-port n="Perspective" w="142"></view-port><view-port n="Front" w="63"></view-port><view-port n="Right" w="63"></view-port></div>`);

/* ---------- right panels ---------- */
def('panel-head',`:host{background:linear-gradient(#fafafa,#dfdfdf);border-bottom:1px solid #cfcfcf;flex:none}
.t{height:46px;display:flex;align-items:center;justify-content:flex-end;padding:2px 6px 0 0}
.t div{width:56px;height:32px;border:2px solid #999;border-radius:8px;background:#fafafa}
.r{display:flex;justify-content:center;gap:20px;height:60px;align-items:center;padding-right:13px}`,
 e=>{const g=(e.getAttribute('icons')).split('|'),on=e.getAttribute('on');return `<div class="t"><slot></slot><div><svg width="52" height="28"><g transform="translate(17 14)"><circle r="5.500" fill="none" stroke="#222" stroke-width="5"/>${[0,45,90,135].map(a=>`<rect x="-2" y="-10" width="4" height="5" fill="#222" transform="rotate(${a})"/><rect x="-2" y="5" width="4" height="5" fill="#222" transform="rotate(${a})"/>`).join('')}</g><path d="M35 12L39 18L43 12" fill="none" stroke="#222" stroke-width="2.500"/></svg></div></div>`+g.map(r=>`<div class="r">${r.split(' ').map(n=>`<i-c n="${n}" ${n==on?'c="#2f78f0"':''}></i-c>`).join('')}</div>`).join('')});
def('push-btn',':host{height:32px;width:159px;border-radius:7px;background:#fff;box-shadow:0 1px 2px #0004;display:flex;align-items:center;justify-content:center}:host([off]){color:#bbb;background:#faf7fb;box-shadow:0 0 1px #0003}','<slot></slot>');
def('pop-up',':host{height:32px;border-radius:7px;background:#fff;box-shadow:0 1px 2px #0004;display:flex;align-items:center;justify-content:space-between;padding:0 4px 0 13px}svg{display:block}','<slot></slot><svg width="24" height="24"><rect width="24" height="24" rx="6" fill="#3b82f6"/><path d="M8 9.500L12 5.500L16 9.500M8 14.500L12 18.500L16 14.500" fill="none" stroke="#fff" stroke-width="2.200" stroke-linecap="round"/></svg>');
def('mesh-panel',`:host{height:703px;border-bottom:3px solid #808080;flex:none}
.b{margin:16px 0 0 16px;width:553px;height:382px;border:2px solid #d6d2d8;background:#fff;overflow:hidden;font:24px/28px "Liberation Sans",sans-serif;color:#000;padding-left:10px;white-space:pre}.b>div{margin-top:-7px}
.k{display:flex;gap:2px;margin:14px 0 0 17px;font-size:21px}.n{margin:18px 18px 0 0;display:flex;justify-content:flex-end;font-size:21px}.b fit-text{display:block}`,
 `<panel-head style="height:176px" on="p_fix" icons="p_lay p_lay2 p_doc p_box p_scr p_mon p_q p_lib p_fix|p_bell p_leg"><span style="margin-right:149px">${T(203,'Panels: Mesh Repair')}</span></panel-head>
 <div class="b"><div>${[['Layer name: Default',215],['Render Material:',177],['  source = from layer',219],['  index = -1',117],['',0],['Geometry:',112],['  Valid mesh.',136],['  Closed polygon mesh: 3176 vertices, 3369',466],['faces with normals',198],['    Bounding box: (-21,-295.9,-108) to',392],['(87,-189.1,-72)',158],['    Customized meshing parameters.',384],['    Absolute SubD meshing density = 256 mesh',497],['quads per SubD quad.',240]].map(([t,w])=>w?T(w,t,'pre'):'<div style="height:28px"></div>').join('')}</div></div>
 <div class="k"><push-btn>${T(123,'Check Mesh')}</push-btn><push-btn off>${T(123,'Repair Mesh')}</push-btn></div><div class="n"><push-btn>${T(47,'Next')}</push-btn></div>`);
def('display-panel',`:host{flex:1;overflow:hidden;min-height:0}
.h{font-size:25px;padding-left:41px;height:40px;display:flex;align-items:center}.r{display:flex;align-items:center;height:44px;gap:16px}.c{padding-left:83px}`,
 `<panel-head style="height:118px" on="p_mon" icons="p_lay p_lay2 p_doc p_box p_scr p_mon p_q"><span style="margin-right:175px">${T(150,'Panels: Display')}</span></panel-head>
 <div class="h" style="margin-top:12px">${T(213,'Viewport settings')}</div>
 <div class="r" style="padding-left:81px">${T(168,'Active viewport:')}${T(38,'Top')}</div><div class="r" style="padding-left:100px;height:47px">${T(149,'Display mode:')}<pop-up style="width:159px">${T(109,'Wireframe')}</pop-up></div>
 <div class="r" style="padding-left:41px;height:64px">${T(124,'Background')}<pop-up style="width:303px">${T(254,'Use application settings')}</pop-up></div>
 <div class="h" style="margin:13px 0 14px">${T(197,'General settings')}</div>
 <div class="c">${rows([['Flat shading',127,'x'],['Shade vertex colors',207,'x'],['Shadows',94,'x'],['Surface isocurves',187,1],['Surface edges',152,1],['SubD wires',118,1],['SubD creases',144,1],['SubD boundaries',180,1]])}</div>`);
def('status-bar',`:host{height:56px;flex:none;background:linear-gradient(#d8d8d8,#b9b9b9);border-radius:0 0 20px 20px;display:flex;align-items:center;font-size:22px;padding:2px 0 0 10px;color:#222}
.s{width:139px;height:32px;border:2px solid #8d8d8d;border-radius:7px;display:flex;align-items:center;padding-left:9px;gap:28px;margin:0 30px 0 33px}`,
 `<svg width="32" height="20" stroke="#555" stroke-width="1.600"><path d="M6 3H26M6 10H26M6 17H26M0 3H3M0 10H3M0 17H3"/></svg>${T(242,'Undoing Gumball move')}<span style="width:1271px"></span>${T(113,'Millimeters')}<div class="s">${T(71,'CPlane')}<svg width="14" height="24" fill="none" stroke="#888" stroke-width="2"><path d="M2 8L7 3L12 8M2 16L7 21L12 16"/></svg></div>${T(96,'X: 14.334')}<span style="width:67px"></span>${T(122,'Y: -236.626')}<span style="width:49px"></span>${T(85,'Z: 0.000')}`);
def('rhino-window',`:host{position:absolute;left:148px;top:49px;width:2576px;height:1667px;border-radius:20px;overflow:hidden;display:flex;flex-direction:column;background:#f3eef5}
.m{display:flex;flex:1;min-height:0}.r{flex:1;display:flex;flex-direction:column;min-width:0}`,
 `<snap-bar></snap-bar><tool-tabs></tool-tabs><tool-strip></tool-strip><div class="m"><side-bar></side-bar><view-area></view-area><div class="r"><mesh-panel></mesh-panel><display-panel></display-panel></div></div><status-bar></status-bar>`);
def('rear-window',':host{position:absolute;left:-188px;top:1660px;width:2576px;height:200px;border-top:1px solid #aaa;background:#ddd}snap-bar{margin-top:-1px}','<snap-bar dim></snap-bar><tool-tabs dim></tool-tabs>');

/* ---------- slicer window behind ---------- */
function plate(){let g='',m='';for(let i=0;i<9;i++){g+=L(0,830+i*95,160,750+i*95);m+=L(0,780+i*95,160,960+i*95)}
 let f='';for(let i=0;i<60;i++){f+=L(0,880+i*14,160,800+i*14);f+=L(0,700+i*14,160,880+i*14)}
 return `<svg width="2824" height="1402"><g transform="translate(0 -372)"><rect y="372" width="2824" height="1402" fill="#f7f7f7"/>
 <path d="M0 834L148 757V1660H60L0 1558Z" fill="#d9d9d9"/><path d="M0 990L148 913V1340L0 1116Z" fill="#f4f4f4"/><path d="${f}" stroke="#ccc" stroke-width=".6" opacity=".6"/><path d="${g+m}" stroke="#c9c9c9" stroke-width="1.500"/><path d="M0 600L160 600V750L0 834Z" fill="#f6f6f6"/><path d="M0 834L148 757V818L0 895Z" fill="#d9d9d9"/><path d="M0 1360L148 1600V1660H60L0 1558Z" fill="#dadada"/><path d="M0 895L148 818M0 1360L145 1598" stroke="#4a86e8" stroke-width="1.300" fill="none"/>
 <path d="M2724 955L2824 1030V1774H2724Z" fill="#dadada"/><path d="M2724 1200L2824 1320V1400L2724 1500Z" fill="#ececec"/><path d="M2724 1026L2824 1106M2824 1576L2780 1610M2655 1740L2620 1774" stroke="#4a86e8" stroke-width="1.300"/><path d="M2724 1100L2824 1180M2724 1250L2824 1330M2824 1200L2724 1380M2724 1400L2824 1500M2824 1400L2780 1480M2400 1720L2500 1774M2480 1735L2440 1774" stroke="#c4c4c4" stroke-width="1.500"/><path d="M2824 1715L2764 1774H2824Z" fill="#fff"/></g></svg>`}
def('slicer-window',`:host{position:absolute;left:0;top:108px;width:2824px;height:1666px;border-radius:0 20px 20px 0;overflow:hidden;background:#f7f7f7;font-family:"Noto Sans",sans-serif;box-shadow:0 10px 40px #0006}
.t{height:56px;background:#e8e5eb;border-bottom:1px solid #ccc;display:flex;align-items:center;gap:16px}.t i{width:24px;height:24px;border-radius:50%;background:#d0ccd2;border:1px solid #bbb}
.m{height:52px;background:#fff;display:flex;align-items:center;gap:52px;font-size:24px;color:#222}.n{height:156px;background:#08063f;display:flex;justify-content:space-between;align-items:center;color:#fff}
.u{font-size:51px;font-weight:700;margin:-57px 0 0 -24px}.s{border:2px solid #fff;border-radius:5px;height:52px;width:120px;margin:-52px 27px 0 0;display:flex;align-items:center;justify-content:flex-end;padding-right:6px;font-size:25px}
.v,.p,.c,.k,.j{position:absolute}.v{left:48px;top:214px;width:130px;height:102px;background:#fff;border:2px solid #c4c4c4;border-radius:5px;display:flex;align-items:center;padding-left:24px;font-size:27px;color:#555}
.p{left:-20px;top:611px;width:70px;height:625px;background:#fff;border:2px solid #c0c0c0;border-radius:8px}
.c{left:2300px;top:1373px;width:478px;height:255px;background:#f9f9f9;border:3px solid #bbb;border-radius:5px}.k{left:2650px;top:1526px;width:85px;height:64px;background:#1660d8}
.j{left:2751px;top:350px;width:52px;height:42px;border:2px solid #bbb;background:#fff;display:flex;justify-content:center;align-items:center;font-size:24px}
.x{position:absolute}u{text-decoration-thickness:2px;text-underline-offset:4px}`,
 `<div class="t"><i></i><i></i></div><div class="m"><span style="margin-left:-6px">e</span><span style="margin-left:1px">${T(43,'<u>E</u>dit')}</span></div>
 <div class="n"><span class="u">${T(268,'Ultimaker')}</span><div class="s">${T(78,'Sign in')}</div></div>${plate()}
 <div class="v">${T(66,'View')}</div><div class="p"></div>
 <svg class="x" style="left:0;top:611px" width="200" height="1000" fill="none" stroke="#c9c6d6" stroke-width="5"><path d="M-4 53H14M8 46L15 53L8 60M-4 141H14V177H-4M-4 152H8V165M-4 262C8 260 13 270 14 278M2 290h4M9 285h4M-4 454L14 442M-4 462L12 450M-4 464H14V495H-4M2 476H14M-4 565L10 577L-4 590M6 592L16 600M16 592L6 600"/><path d="M3 365L17 353V378Z" fill="#c9c6d6"/><path d="M78 821L87 813L96 821" stroke="#666" stroke-width="2.500"/><path d="M84 889L103 872L106 877L91 890ZM78 894H106" stroke="#555" stroke-width="2"/></svg>
 <span class="x" style="left:126px;top:1412px;font-size:24px;color:#666">Obj</span><span class="x" style="left:140px;top:1474px;font-size:24px;color:#555">C</span><span class="x" style="left:75px;top:1525px;font-size:24px;color:#666">${T(76,'102.0 x')}</span>
 <div class="c"></div><div class="k"></div><svg class="x" style="left:2690px;top:1408px" width="44" height="44"><circle cx="22" cy="22" r="19" fill="none" stroke="#08063f" stroke-width="3"/></svg>
 <div class="j">${T(25,'41')}</div><svg class="x" style="left:2756px;top:390px" width="44" height="920"><path d="M16 1L22 8L28 1" fill="#fff" stroke="#bbb"/><path d="M22 30V876" stroke="#08063f" stroke-width="12"/><circle cx="22" cy="33" r="20" fill="#08063f"/><circle cx="22" cy="877" r="20" fill="#08063f"/></svg>`);

/* ---------- menu bar ---------- */
def('menu-bar',`:host{position:absolute;left:0;top:0;width:2880px;height:48px;background:linear-gradient(90deg,#e2b0d6,#e2c4e0 32%,#e6d2e6 55%,#e8c5df);display:flex;align-items:center;font-size:25px;color:#231c23;padding-bottom:2px}
.l{display:flex;gap:42.600px;padding-left:40px;align-items:center;width:2036px}.l b{font-weight:700}.d{display:flex;gap:18px;margin-left:31px}svg{display:block}`,
 `<div class="l"><svg width="25" height="32" viewBox="0 0 25 32" style="margin-top:-3px"><path d="M17 0C17 4 14 7 11.500 7C11 3 14 .5 17 0ZM12.500 9.500C14 9.500 16 7.800 18.500 7.800C21 7.800 23 9 24 10.800C19 14 20 20 25 22C23.500 27 20.500 31 18 31C16 31 15 30 12.800 30C10.500 30 9.500 31 7.500 31C3.500 31 0 23 0 17.500C0 11.500 3.500 8 7.500 8C9.700 8 11 9.500 12.500 9.500Z" fill="#231c23"/></svg><b style="margin-right:-1px">${T(94,'Rhino 7')}</b>${[['File',41],['Edit',46],['View',56],['Curve',71],['Surface',93],['SubD',63],['Solid',61],['Mesh',63],['Dimension',126],['Transform',121],['Tools',62],['Analyze',94],['Render',86],['Window',95],['Help',54]].map(([t,w])=>T(w,t)).join('')}</div>
 <svg width="512" height="36" viewBox="2036 6 512 36" fill="none" stroke="#231c23" stroke-width="2.500"><path d="M2064 12L2055 36L2052 25L2038 24Z" fill="#231c23" stroke="none"/><rect x="2104" y="13" width="29" height="21" rx="2" stroke="#4d444d"/><path d="M2114 37H2123" stroke="#4d444d" stroke-width="3"/><path d="M2178 17L2192 30L2185 37V12L2192 18L2178 31" stroke-width="2"/><rect x="2235" y="13" width="43" height="22" rx="6" stroke="#8b7f8b" stroke-width="2"/><rect x="2238" y="16" width="36" height="16" rx="4" fill="#231c23" stroke="none"/><path d="M2281 21V28" stroke="#8b7f8b" stroke-width="3"/><circle cx="2331" cy="22" r="9"/><path d="M2337 28L2346 36" stroke-width="3"/><path d="M2388 20C2395 10 2409 10 2416 20M2393 25C2398 19 2406 19 2411 25" stroke-width="4" stroke="#3c333c"/><path d="M2397 29C2400 26 2404 26 2407 29L2402 35Z" fill="#3c333c" stroke="none"/><rect x="2457" y="13" width="26" height="10" rx="5" stroke="#3c333c"/><circle cx="2462" cy="18" r="3.500" fill="#3c333c" stroke="none"/><rect x="2456" y="26" width="28" height="12" rx="6" fill="#3c333c" stroke="none"/><circle cx="2478" cy="32" r="4" fill="#ead" stroke="none"/><circle cx="2532" cy="24" r="14" fill="#4a5a9c" stroke="none"/><path d="M2520 20C2526 10 2540 12 2544 20L2534 26Z" fill="#4bc4a0" stroke="none"/><path d="M2520 24C2520 34 2530 38 2536 36L2532 24Z" fill="#c0407c" stroke="none"/><circle cx="2533" cy="24" r="5" fill="#d9f0ff" stroke="none"/></svg>
 <div class="d">${T(144,'Mon Nov 14')}${T(100,'4:52 PM')}</div>`);

/* ---------- dock ---------- */
const R=f=>`<rect width="40" height="40" rx="9" fill="${f}"/>`;
const compass='<circle cx="20" cy="20" r="17" fill="#2f8fe8"/><path d="M31 8L23 23L17 17Z" fill="#e8453a"/><path d="M9 32L17 17L23 23Z" fill="#fff"/>';
const finder='<rect width="40" height="40" rx="9" fill="#e9eef5"/><path d="M9 0H22C18 10 17 16 18 24H22V40H9A9 9 0 0 1 0 31V9A9 9 0 0 1 9 0Z" fill="#2f8df5"/><path d="M11 11V15M29 11V15M8 27C14 34 27 34 32 27" fill="none" stroke="#123" stroke-width="2" stroke-linecap="round"/>';
const txt=(t,c,s,y=28)=>`<text x="20" y="${y}" font-size="${s}" font-weight="700" text-anchor="middle" fill="${c}">${t}</text>`;
const ps=R('#071d34')+txt('Ps','#4aa8ff',20,27);
const D={finder,chrome:R('#fff')+'<circle cx="20" cy="20" r="17" fill="#f6c02c"/><path d="M20 20L5 12A17 17 0 0 1 35 12Z" fill="#d8402f"/><path d="M5 12A17 17 0 0 0 19 37L26 24Z" fill="#2e9a4a"/><circle cx="20" cy="20" r="8.500" fill="#fff"/><circle cx="20" cy="20" r="6.500" fill="#3a7be8"/>',
safari:R('#f2f2f4')+compass,msg:R('#5bd458')+'<ellipse cx="20" cy="19" rx="15" ry="12.500" fill="#fff"/><path d="M10 26L8 33L17 30Z" fill="#fff"/>',
pad:R('#e8e6ec')+['#58c84c','#f0a83a','#f08a30','#d8342c','#b0b0b0','#e84a6c','#a048d8','#3a86f0','#4ac8b8'].map((c,i)=>`<rect x="${7+i%3*10}" y="${6+(i/3|0)*10}" width="8" height="8" rx="2" fill="${c}"/>`).join(''),
mail:R('#3d8cf0')+'<rect x="6" y="11" width="28" height="18" rx="3" fill="#fff"/><path d="M7 12L20 23L33 12M7 28L16 20M33 28L24 20" fill="none" stroke="#999" stroke-width="1.300"/>',
maps:R('#eee')+'<path d="M24 0H31A9 9 0 0 1 40 9V31A9 9 0 0 1 36 38Z" fill="#67cc66"/><path d="M0 12L12 8V0H9A9 9 0 0 0 0 9Z" fill="#6c6"/><path d="M0 22L10 18L12 40H9A9 9 0 0 1 0 31Z" fill="#f0a0c8"/><path d="M22 40L25 30L36 38L31 40Z" fill="#f8ce46"/><rect x="12" width="8" height="18" fill="#3a80f0"/><circle cx="16" cy="26" r="9.500" fill="#3a80f0" stroke="#fff" stroke-width="2"/><path d="M16 19L21 31L16 28L11 31Z" fill="#fff"/>',
face:R('#5ccf5a')+'<rect x="6" y="12" width="20" height="17" rx="4" fill="#fff"/><path d="M28 18L34 13V28L28 23Z" fill="#fff"/>',
cal:R('#fafafa')+'<path d="M0 12V9A9 9 0 0 1 9 0H31A9 9 0 0 1 40 9V12Z" fill="#e4564c"/>'+'<text x="20" y="9.500" font-size="8" font-weight="700" text-anchor="middle" fill="#fff">NOV</text><text x="20" y="34" font-size="23" text-anchor="middle" fill="#333">14</text>',
photo:R('#fff')+['#f6953a','#f2d43a','#9ccf4a','#54b87a','#5a9be0','#8a6cc8','#c25ca8','#e8504a'].map((c,i)=>`<ellipse cx="20" cy="11" rx="5.500" ry="8" fill="${c}" opacity=".85" transform="rotate(${i*45} 20 20)"/>`).join(''),
cont:R('#a97f48')+'<circle cx="20" cy="20" r="13" fill="none" stroke="#8a6433" stroke-width="2"/><circle cx="20" cy="16" r="5" fill="#8a6433"/><path d="M10 28C12 22 28 22 30 28A13 13 0 0 1 10 28Z" fill="#8a6433"/>',
rem:R('#fff')+'<circle cx="8" cy="10" r="3.500" fill="#3a80f0"/><circle cx="8" cy="20" r="3.500" fill="#e4564c"/><circle cx="8" cy="30" r="3.500" fill="#f09a3a"/><path d="M15 10H35M15 20H35M15 30H35" stroke="#bbb" stroke-width="1.600"/>',
note:R('#f7f5f0')+'<path d="M0 11V9A9 9 0 0 1 9 0H31A9 9 0 0 1 40 9V11Z" fill="#f8cf46"/><path d="M0 21H40M0 30H40" stroke="#ccc"/>',
tv:R('#14191a')+'<text x="24" y="26" font-size="16" font-weight="600" text-anchor="middle" fill="#fff">tv</text><path d="M10 14C13 12 15 13 16 15C14 17 14 20 17 21C16 25 14 27 12 26C9 27 6 24 6 19C6 15 8 13 10 14ZM12 11C12 9 13 8 14 8C14 10 13 11 12 11Z" fill="#fff"/>',
pod:R('#a04ad8')+'<g fill="none" stroke="#fff" stroke-width="2.200"><circle cx="20" cy="19" r="13"/><circle cx="20" cy="19" r="8"/></g><circle cx="20" cy="18" r="4" fill="#fff"/><rect x="17" y="24" width="6" height="12" rx="3" fill="#fff"/>',
news:R('#fff')+'<path d="M8 8H17L32 30V32H24L8 12ZM8 20L17 32H8ZM32 8V20L24 8Z" fill="#ea3f58"/>',
mus:R('#ee4458')+'<path d="M15 28V11L29 8V25" fill="none" stroke="#fff" stroke-width="3"/><circle cx="12" cy="29" r="4" fill="#fff"/><circle cx="26" cy="26" r="4" fill="#fff"/>',
key:R('#f6f8fb')+'<path d="M2 20H38M2 30H38M11 18V38M29 18V38" stroke="#c5dcf5"/><rect x="8" y="5" width="24" height="12" rx="1" fill="#2f86e8"/><rect x="11" y="7" width="18" height="8" fill="#eaf3fd"/><circle cx="20" cy="11" r="4" fill="#f4843a"/><path d="M20 11V7A4 4 0 0 1 24 11Z" fill="#4bbf4b"/><path d="M20 17V34M14 35H26" stroke="#666" stroke-width="2"/>',
num:R('#f8fbf8')+'<rect x="7" y="21" width="6" height="13" fill="#e4453a"/><rect x="13" y="14" width="6" height="20" fill="#f0963a"/><rect x="20" y="6" width="6" height="28" fill="#4cbf3e"/><rect x="27" y="16" width="6" height="18" fill="#3a86e8"/>',
page:R('#fdfaf3')+'<path d="M33 5L19 28" stroke="#f0963a" stroke-width="5"/><path d="M19 28L15 35" stroke="#333" stroke-width="3"/><text x="10" y="22" font-size="22" font-weight="700" text-anchor="middle" fill="#f0a83a">“</text>',
set:R('#9a9c9e')+'<circle cx="20" cy="20" r="15" fill="#777" stroke="#222" stroke-width="4" stroke-dasharray="2.500 1"/><circle cx="20" cy="20" r="9" fill="#aaa" stroke="#222" stroke-width="3"/><path d="M20 20L32 20M20 20L13 9M20 20L13 31" stroke="#222" stroke-width="2.500"/>',
app:R('#2f90f2')+'<path d="M21 9L31 31M19 9L9 31M7 26H33" stroke="#fff" stroke-width="3.200" stroke-linecap="round"/>',
prev:R('#e8ecf2')+'<rect x="3" y="3" width="34" height="16" fill="#7ba4de"/><rect x="3" y="19" width="34" height="6" fill="#2c4a80"/><rect x="3" y="25" width="34" height="10" fill="#c9b396"/><path d="M22 20H36V30L40 42H20Z" fill="#2a2a2c"/><path d="M22 29L36 29L39 41H20Z" fill="#bbb"/>',
ae:R('#0a0550')+txt('Ae','#9a94ff',21,27),cura:'<path d="M3 1H37V31L28 39H1V9Z" fill="#2563e8" stroke="#fff" stroke-width="2"/>'+txt('C','#fff',25,29),
rh:'<g transform="rotate(-8 20 20)"><rect x="-1" y="-2" width="42" height="44" rx="4" fill="#444"/><path d="M2 4L16 22L8 10L22 30L30 20V36L14 38L4 24Z" fill="#eee"/><path d="M10 22L22 26L18 30Z" fill="#c22"/><text x="31" y="17" font-size="18" font-weight="700" text-anchor="middle" fill="#999">7</text></g>',ps,
trash:'<path d="M4 6H36L31 40Q20 44 9 40Z" fill="#e4e2e6" stroke="#c5c2c8"/><path d="M4 6L12 0L20 4L30 -1L36 6L28 10L12 10Z" fill="#fff" stroke="#777"/><path d="M12 3L18 8M25 2L22 8" stroke="#444" stroke-width="2.500"/>'};
const th=(bg,inner,ov)=>`<rect x="-4" y="4" width="48" height="31" fill="${bg}"/>${inner}<g transform="translate(27 26) scale(.42)">${ov}</g>`;
D.t1=th('#fff','<rect x="-4" y="4" width="48" height="4" fill="#e5dde6"/>',R('#fff')+compass);D.t2=th('#fff','<rect x="-4" y="4" width="48" height="6" fill="#ece4ee"/><rect x="-4" y="4" width="9" height="31" fill="#efe9f1"/><path d="M8 16H20" stroke="#bbb" stroke-width="2" stroke-dasharray="3 2"/>',finder);D.t3=D.t2;
D.t4=th('#8d8d8d','<rect x="-4" y="4" width="48" height="4" fill="#ddd"/><rect x="13" y="14" width="13" height="13" fill="#9aa2ab"/><circle cx="19" cy="19" r="3" fill="#333"/>',D.prev);D.t5=th('#fff','<rect x="-4" y="4" width="9" height="31" fill="#451b45"/><rect x="-4" y="4" width="48" height="3" fill="#451b45"/><rect x="9" y="9" width="12" height="20" fill="#b9a08c"/><rect x="31" y="8" width="12" height="22" fill="#ddd"/>',R('#fff')+compass);
D.t6=th('#222','<rect x="8" y="8" width="8" height="10" fill="#8ab"/><path d="M8 28H32" stroke="#eee" stroke-width="6" stroke-dasharray="5 2"/>',ps);
def('dock-app',`:host{width:54px;height:66px;display:flex;justify-content:center;position:relative;padding-top:11px;flex:none}svg{display:block;overflow:visible}svg text{font-family:Inter}
b{position:absolute;left:35px;top:4px;min-width:21px;height:21px;border-radius:11px;background:#e9503f;color:#fff;font:500 12px/21px Inter;text-align:center}i{position:absolute;left:24px;top:60px;width:6px;height:6px;border-radius:50%;background:#3a3440}`,
 e=>{const b=e.getAttribute('b');return `<svg width="40" height="40" viewBox="0 0 40 40">${D[e.getAttribute('n')]}</svg>${b?`<b>${b}</b>`:''}${e.hasAttribute('r')?'<i></i>':''}`});
def('app-dock',':host{position:absolute;left:493px;top:1718px;width:1895px;height:71px;border-radius:20px;background:#cac3d0;border:2px solid #d8d2dc;display:flex;padding:0 0 0 3px;box-shadow:0 0 3px #0005}u{width:2px;height:52px;background:#958e9b;margin:10px 11px 0 11px;flex:none}',
 'finder! chrome! safari! msg!4 pad mail maps face cal photo cont rem:23 note tv:1 pod news mus key num page set:1 app prev! ae | cura! rh! ps! | t1 t2 t3 t4 t5 t6 trash'.split(' ').map(s=>s=='|'?'<u></u>':`<dock-app n="${s.match(/^[a-z]+\d?(?=$|!|:)/)[0]}" ${s.includes('!')?'r':''} b="${(s.match(/[!:](\d+)/)||[])[1]||''}"></dock-app>`).join(''));

/* ---------- desktop ---------- */
def('desk-top',`:host{position:absolute;inset:0;width:2880px;height:1800px;overflow:hidden}.w{position:absolute;left:0;top:0}.s{position:absolute;left:148px;top:49px;width:2576px;height:1667px;border-radius:20px;box-shadow:0 0 0 1px #0005,0 24px 66px 12px #0007}.f{position:absolute;color:#fff;font-weight:700;font-size:22px;text-shadow:0 2px 4px #000a}`,
 `<svg class="w" width="2880" height="1800"><defs><linearGradient id="a" x2="0" y2="1"><stop stop-color="#8c22cc"/><stop offset="1" stop-color="#4208d6"/></linearGradient></defs><rect width="2880" height="1800" fill="#c86ca1"/><path d="M0 0H700V160H0Z" fill="#b437a6"/><path d="M40 48H440V120H130Z" fill="#be409f"/><path d="M440 48H661V60H440Z" fill="#c64a6e"/><path d="M2700 1180L2880 920V1800H2700Z" fill="#a93dc2"/><path d="M2300 1400L2880 1280V1800H2300Z" fill="url(#a)"/><path d="M2300 1700Q2600 1590 2880 1586V1800H2300Z" fill="#4a0cc4"/><path d="M2700 91H2802V110M2720 85H2730" fill="none" stroke="#bdb9bb" stroke-width="4"/></svg>
 ${[['(2)',480],['PM',704],['(2)',928],['PM',1152],['rec',1343],['stl',1567]].map(([t,y])=>`<span class="f" style="left:${t=='stl'?2821:2825}px;top:${y-14}px">${T(t=='stl'?28:t=='PM'?33:t=='rec'?36:33,t)}</span>`).join('')}
 <slicer-window></slicer-window><rear-window></rear-window><div class="s"></div><rhino-window></rhino-window><menu-bar></menu-bar><app-dock></app-dock>`);

/* Sets tracking so that a label takes exactly the width it is given. */
customElements.define('fit-text',class extends HTMLElement{
  connectedCallback(){
    if(this.shadowRoot)return;
    this.attachShadow({mode:'open'}).innerHTML='<style>:host{display:inline-block;white-space:nowrap;flex:none}:host([pre]){white-space:pre}span{display:inline-block}</style><span><slot></slot></span>';
    const s=this.shadowRoot.querySelector('span'),w=+this.getAttribute('w'),n=this.textContent.length;
    const d=(w-s.getBoundingClientRect().width)/Math.max(1,n-1);
    s.style.letterSpacing=d.toFixed(3)+'px';this.style.width=w+'px';
  }});
</script>
</body>
</html>
